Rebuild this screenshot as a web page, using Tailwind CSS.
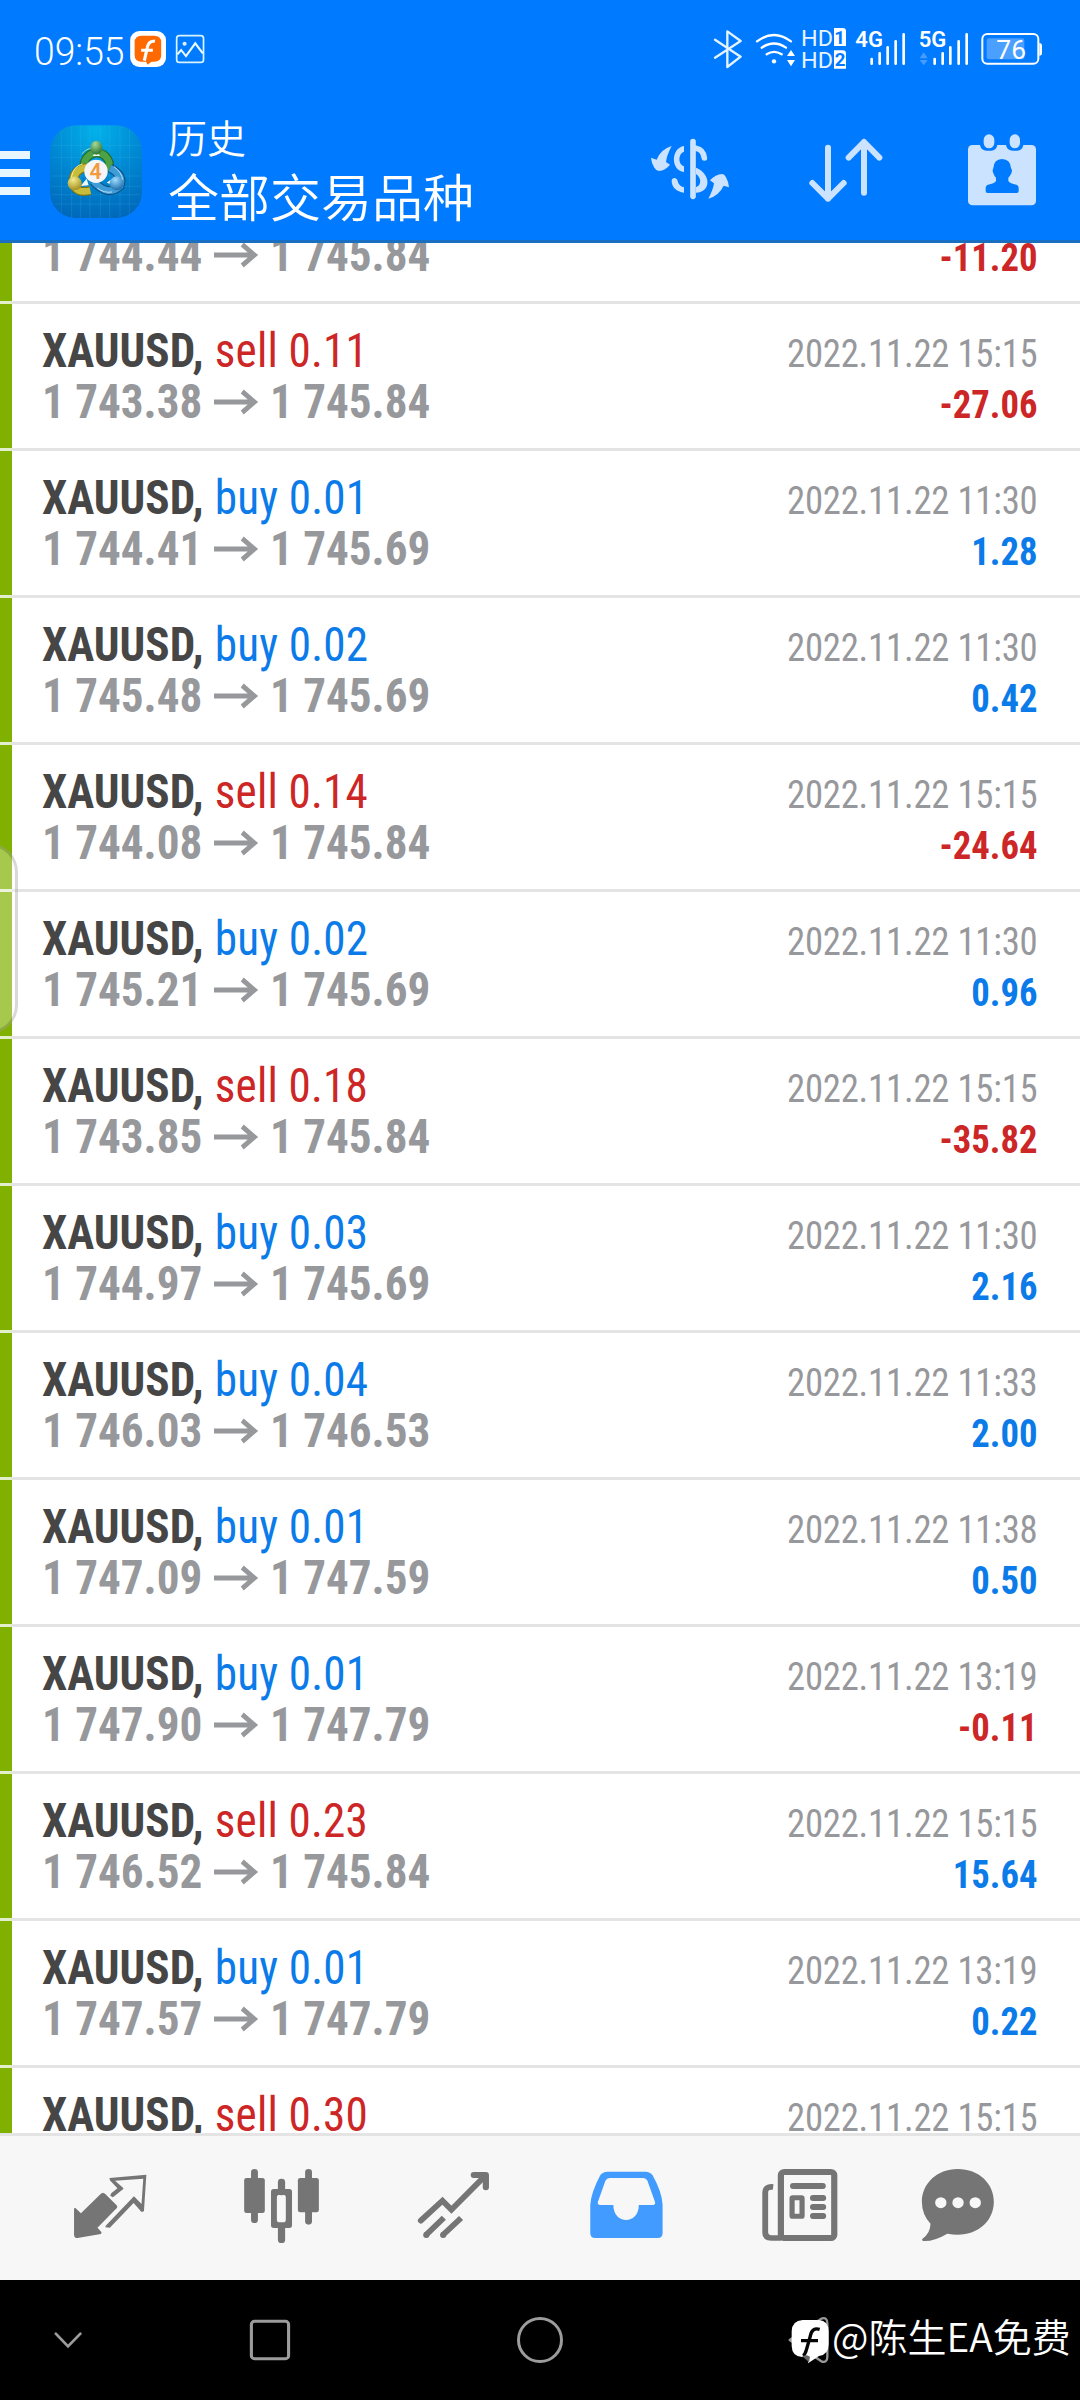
<!DOCTYPE html>
<html lang="zh-CN">
<head>
<meta charset="utf-8">
<title>历史</title>
<script src="https://cdn.jsdelivr.net/npm/@tailwindcss/browser@4"></script>
</head>
<body class="bg-black">
<div class="relative flex h-[2400px] w-[1080px] flex-col overflow-hidden bg-white font-[Roboto,'Noto_Sans_CJK_SC',sans-serif]">

  <!-- header -->
  <header class="flex h-[243px] shrink-0 flex-col border-b-3 border-[#1a6fc0] bg-[#007aff] text-white">
    <div class="flex h-[100px] items-center">
      <span class="ml-[34px] w-[94px] origin-left scale-x-[.98] pt-[3px] text-[38px] leading-none font-[350] whitespace-nowrap">09:55</span>
      <svg class="h-[100px] w-[82px]" viewBox="371.7 0 238.1 300" preserveAspectRatio="none">
        <rect x="378" y="93" width="104" height="108" rx="27" fill="#fff"/>
        <path d="M411 107h37q20 0 20 20v38q0 20-20 20h-8l-13 8-2-8h-14q-20 0-20-20v-38q0-20 20-20z" fill="#ff6a00"/>
        <path d="M450 124q-18-3-22 18l-9 40M410 151h34" fill="none" stroke="#fff" stroke-width="9"/>
        <path d="M425 180l4 14 14-13z" fill="#ff6a00"/>
        <rect x="513" y="107" width="78" height="80" rx="8" fill="none" stroke="#d9f3ff" stroke-width="5"/>
        <circle cx="536" cy="131" r="6" fill="#d9f3ff"/>
        <path d="M515 163l11-13 14 18 27-38 22 30" fill="none" stroke="#e9fbff" stroke-width="6"/>
      </svg>
      <svg class="ml-auto h-[100px] w-[380px]" viewBox="300 0 1140 300" fill="none" stroke="#fff" stroke-linecap="round">
        <path d="M345 119l77 51-40 31V94l40 29-77 50" stroke-width="7" stroke="#e4f4ff" stroke-linejoin="round"/>
        <path d="M471 124q51-38 102 0M485 143q37-25 73 0M500 163q22-15 45 0" stroke-width="7"/>
        <circle cx="522" cy="184" r="6.500" fill="#fff" stroke="none"/>
        <path d="M573 150l12 18h-24zM573 199l12-19h-24z" fill="#fff" stroke="none"/>
        <g stroke="none" fill="#e6f4ff" font-family="Roboto" font-size="67">
          <text x="603" y="137" textLength="96" lengthAdjust="spacingAndGlyphs">HD</text>
          <text x="603" y="204" textLength="96" lengthAdjust="spacingAndGlyphs">HD</text>
        </g>
        <path d="M702 84h26q10 0 10 10v44h-36zM702 151h26q10 0 10 10v45h-36z" fill="#fff" stroke="none"/>
        <g stroke="none" fill="#007aff" font-family="Roboto" font-weight="700" font-size="56">
          <text x="703" y="133">1</text><text x="704" y="199">2</text>
        </g>
        <g stroke="none" fill="#fff" font-family="Roboto" font-weight="600" font-size="64">
          <text x="766" y="141" textLength="83" lengthAdjust="spacingAndGlyphs">4G</text>
          <text x="956" y="141" textLength="83" lengthAdjust="spacingAndGlyphs">5G</text>
        </g>
        <path d="M815 177v14M839 160v31M863 142v49M887 124v67M911 103v88M1004 177v14M1028 160v31M1051 142v49M1076 124v67M1100 103v88" stroke-width="8"/>
        <path d="M971 157l12 18h-24zM971 196l12-16h-24z" fill="#479dff" stroke="none"/>
        <rect x="1147" y="102" width="168" height="89" rx="15" stroke-width="6"/>
        <path d="M1318 129q8 0 8 8v22q0 8-8 8z" fill="#fff" stroke="none"/>
        <rect x="1160" y="115" width="113" height="63" rx="6" fill="#4a9fff" stroke="none"/>
        <text x="1189" y="177" stroke="none" fill="#fff" font-family="Roboto" font-size="80" textLength="89" lengthAdjust="spacingAndGlyphs">76</text>
      </svg>
    </div>
    <div class="flex h-[140px] items-center">
      <div class="mt-[6px] flex w-[30px] flex-col gap-[10px]">
        <i class="h-[8px] bg-[#e8f6ff]"></i><i class="h-[8px] bg-[#e8f6ff]"></i><i class="h-[8px] bg-[#e8f6ff]"></i>
      </div>
      <svg class="mt-[3px] ml-[20px] h-[94px] w-[92px]" viewBox="30 43 276 282">
        <defs>
          <radialGradient id="sky" cx=".5" cy=".05" r="1"><stop offset="0" stop-color="#02b2ea"/><stop offset=".5" stop-color="#0088d2"/><stop offset="1" stop-color="#0066b8"/></radialGradient>
          <radialGradient id="gr" cx=".4" cy=".25" r=".8"><stop offset="0" stop-color="#a5d99a"/><stop offset="1" stop-color="#23702b"/></radialGradient>
          <radialGradient id="ye" cx=".4" cy=".25" r=".8"><stop offset="0" stop-color="#f4ec8c"/><stop offset="1" stop-color="#a08a1a"/></radialGradient>
          <radialGradient id="bl" cx=".4" cy=".25" r=".8"><stop offset="0" stop-color="#9fdcff"/><stop offset="1" stop-color="#1468a6"/></radialGradient>
        </defs>
        <rect x="30" y="44" width="276" height="278" rx="78" fill="url(#sky)"/>
        <path d="M64 60v248M95 46v276M122 46v276M150 46v276M181 46v276M209 46v276M240 46v276M268 56v256M34 104h268M32 140h272M32 196h272M32 227h272M36 252h264M44 280h248" stroke="#5cc4f4" stroke-opacity=".25" stroke-width="2"/>
        <g fill="none">
          <path d="M133 172a38 38 0 1 1 72 8" stroke="#1f6d2a" stroke-width="27"/>
          <path d="M133 172a38 38 0 1 1 72 8" stroke="#4ea246" stroke-width="20"/>
          <path d="M125 130q20-26 58-14" stroke="#a8dc9c" stroke-width="3"/>
          <path d="M140 170q-41 8-41 44 5 36 52 26" stroke="#7c7414" stroke-width="27"/>
          <path d="M140 170q-41 8-41 44 5 36 52 26" stroke="#c8bd3a" stroke-width="20"/>
          <path d="M94 200q6-34 34-40" stroke="#f6f09a" stroke-width="3"/>
          <path d="M210 172q42 22 30 54-36 34-80-14" stroke="#0d5288" stroke-width="27"/>
          <path d="M210 172q42 22 30 54-36 34-80-14" stroke="#3f9cd6" stroke-width="20"/>
          <path d="M222 168q24 18 26 40M172 232q20 16 44 12" stroke="#b4e2fa" stroke-width="3"/>
        </g>
        <path d="M158 136h22l-11-16zM200 216l20-14-2 20zM122 226l18-22 6 20z" fill="#eefaf0"/>
        <ellipse cx="169" cy="111" rx="18" ry="21" fill="url(#gr)"/>
        <circle cx="104" cy="218" r="21" fill="url(#ye)"/>
        <circle cx="230" cy="218" r="21" fill="url(#bl)"/>
        <circle cx="168" cy="182" r="35" fill="#f5f5f7"/>
        <text x="167" y="205" text-anchor="middle" font-family="Roboto" font-weight="600" font-size="64" fill="#f19a3e">4</text>
      </svg>
      <div class="-mt-[9px] ml-[26px] flex flex-col font-['Noto_Sans_CJK_SC',sans-serif] font-[350] whitespace-nowrap">
        <span class="text-[39px] leading-[58px]">历史</span>
        <span class="text-[51px] leading-[60px]">全部交易品种</span>
      </div>
      <svg class="ml-auto h-[140px] w-[440px]" viewBox="120 300 1320 420" fill="none" stroke="#cbe3ff" stroke-linecap="round" stroke-linejoin="round">
        <path d="M279 425v164" stroke-width="17"/>
        <path d="M288 445q22 4 25 29" stroke-width="17"/>
        <path d="M252 438c-40 6-40 74 0 78v-17c-19-6-18-38 0-44z" fill="#cbe3ff" stroke="none"/>
        <path d="M288 503c46 18 46 74 0 75v-17c17-4 17-28 0-39z" fill="#cbe3ff" stroke="none"/>
        <path d="M215 543c0-12 16-12 18 0 2 10 8 16 19 19v16c-22-3-37-16-37-35z" fill="#cbe3ff" stroke="none"/>
        <path d="M215 438q-15 28-17 48l12 8q-14 18-33 19-8 0-14-10-9-15-10-30l17 6q12-31 45-41z" fill="#cbe3ff" stroke="none"/>
        <path d="M325 596q15-28 17-46l-12-9q16-18 37-19 6 0 11 10 8 14 9 30l-16-5q-14 30-46 39z" fill="#cbe3ff" stroke="none"/>
        <path d="M684 443v153M637 549l47 47 47-47M792 578V426M746 473l46-47 46 47" stroke-width="18"/>
        <g stroke="none" fill="#cbe3ff">
          <rect x="1104" y="435" width="204" height="181" rx="13"/>
          <path d="M1140 430v6q4 16 20 16h14q14 0 18-16v-6zM1218 430v6q4 16 20 16h14q14 0 18-16v-6z" fill="#007aff"/>
          <rect x="1151" y="403" width="32" height="42" rx="16"/>
          <rect x="1229" y="403" width="31" height="42" rx="16"/>
          <path d="M1206 477q26 1 27 28 5 5 1 15-4 9-9 13v10q5 8 24 11 7 2 7 12v8q0 5-6 5h-87q-6 0-6-5v-8q0-10 7-12 19-3 24-11v-10q-5-4-8-13-4-10 0-15 1-27 26-28z" fill="#007aff"/>
        </g>
      </svg>
    </div>
  </header>

  <!-- deals -->
  <main class="h-[1890px] shrink-0 overflow-hidden">
    <ul id="deals" class="-mt-[86px]"></ul>
  </main>

  <!-- tab bar -->
  <nav class="grid h-[147px] shrink-0 grid-cols-6 border-t-3 border-[#e4e4e4] bg-[#f7f7f7]">
    <svg class="h-[144px] w-[180px]" viewBox="0 288 522.7 432" preserveAspectRatio="none" fill="#757575">
      <path d="M299 458l6 3 35 36v6l-57 60 12 14-2 5-68 12q-10 0-10-10v-79l4-1 16 16 58-59z"/>
      <path fill-rule="evenodd" d="M318 414l107-10-7 110-7 2-23-27-69 74-13-1 1-5 82-88 22 23 5-76-82 6 24 22v3l-30 25-8-5 3-7 18-15-22-24z"/>
    </svg>
    <svg class="h-[144px] w-[180px]" viewBox="522.7 288 522.7 432" preserveAspectRatio="none" fill="#757575">
      <rect x="709" y="414" width="60" height="105" rx="7"/><rect x="729" y="387" width="20" height="162" rx="10"/>
      <rect x="865" y="414" width="61" height="103" rx="7"/><rect x="886" y="387" width="20" height="167" rx="10"/>
      <rect x="807" y="416" width="21" height="50" rx="10"/><rect x="807" y="550" width="21" height="59" rx="10"/>
      <path fill-rule="evenodd" d="M795 447h45q8 0 8 8v101q0 8-8 8h-45q-8 0-8-8V455q0-8 8-8zm17 17q-8 0-8 8v67q0 8 8 8h10q8 0 8-8v-67q0-8-8-8z"/>
    </svg>
    <svg class="h-[144px] w-[180px]" viewBox="1045.500 288 522.7 432" preserveAspectRatio="none" fill="none" stroke="#757575" stroke-width="17">
      <path d="M1222 542l63-60 26 27 98-102" stroke-linecap="round"/>
      <path d="M1376 405h35v37" stroke-linecap="round" stroke-linejoin="round" stroke-width="18"/>
      <circle cx="1238" cy="585" r="9" fill="#757575" stroke="none"/><circle cx="1287" cy="585" r="9" fill="#757575" stroke="none"/>
      <path d="M1237 585l52-52M1286 585l53-51"/>
    </svg>
    <svg class="h-[144px] w-[180px]" viewBox="0 288 522.7 432" preserveAspectRatio="none">
      <path fill="#429cff" fill-rule="evenodd" d="M196 395h110q14 0 21 11 27 50 29 88v86q0 14-14 14H160q-14 0-14-14v-86q3-38 29-88 7-11 21-11zm6 19q-8 0-12 8l-22 64q-2 8 7 9h38c0 60 74 60 74 0h41q8-1 6-9l-22-64q-4-8-12-8z"/>
    </svg>
    <svg class="h-[144px] w-[180px]" viewBox="522.7 288 522.7 432" preserveAspectRatio="none" fill="none" stroke="#757575">
      <rect x="699.500" y="396" width="155" height="198" rx="10" stroke-width="18"/>
      <path d="M677 441q-23-3-23 18v118q0 17 18 17h28" stroke-width="17"/>
      <path d="M735 438h86M793 474h29M793 501h29M793 528h29" stroke-width="18" stroke-linecap="round"/>
      <rect x="732" y="473" width="29" height="56" rx="2" stroke-width="15" stroke-linejoin="round"/>
    </svg>
    <svg class="h-[144px] w-[180px]" viewBox="1045.500 288 522.7 432" preserveAspectRatio="none" fill="#757575">
      <path d="M1213 387c62 0 105 44 105 98 0 56-44 99-105 99q-14 0-30-3-40 24-70 22-5-2-3-6 24-18 24-46-25-28-25-66c0-54 44-98 104-98z"/>
      <circle cx="1164" cy="488" r="16.500" fill="#f7f7f7"/><circle cx="1214" cy="488" r="16.500" fill="#f7f7f7"/><circle cx="1264" cy="488" r="16.500" fill="#f7f7f7"/>
    </svg>
  </nav>

  <!-- system navigation -->
  <footer class="flex h-[120px] shrink-0 items-center bg-black text-white">
    <svg class="h-[120px] w-[160px]" viewBox="0 720 464.6 360" preserveAspectRatio="none" fill="none" stroke="#9c9c9c" stroke-width="8"><path d="M162 881l35.500 38 36-38" stroke-linecap="round"/></svg>
    <svg class="h-[120px] w-[220px]" viewBox="464.6 720 638.9 360" preserveAspectRatio="none" fill="none" stroke="#9c9c9c" stroke-width="9"><rect x="730" y="844" width="108" height="112" rx="9"/></svg>
    <svg class="h-[120px] w-[320px]" viewBox="380 2280 320 120" fill="none" stroke="#9c9c9c" stroke-width="3"><circle cx="540" cy="2340" r="21.500"/></svg>
    <svg class="ml-[80px] h-[120px] w-[52px]" viewBox="0 -90 156 360">
      <path d="M29 90l95-64q18-6 18 14v100q0 20-18 14z" fill="#000" stroke="#999" stroke-width="7" stroke-linejoin="round"/>
      <path d="M68 30h48q30 2 30 34v38q0 32-29 36l-33 22 3-19H66q-30-2-31-33V64q1-32 33-34z" fill="#fff"/>
      <path d="M119 58q-23-7-28 20l-12 42q-4 14-10 17M63 92h51" fill="none" stroke="#050505" stroke-width="10"/>
      <path d="M66 138l15-2 9 4-3 17z" fill="#666"/>
    </svg>
    <span class="pb-[10px] font-['Noto_Sans_CJK_SC',sans-serif] text-[39px] leading-none font-[350] whitespace-nowrap">@陈生EA免费</span>
  </footer>

  <!-- edge panel handle -->
  <div class="absolute top-[843px] -left-10 h-[191px] w-[58px] rounded-[29px] border-3 border-black/15 bg-white/30"></div>
</div>

<script>
  const deals = [
    ['sell', '0.10', '1 744.44', '1 745.84', '15:15', '-11.20'],
    ['sell', '0.11', '1 743.38', '1 745.84', '15:15', '-27.06'],
    ['buy', '0.01', '1 744.41', '1 745.69', '11:30', '1.28'],
    ['buy', '0.02', '1 745.48', '1 745.69', '11:30', '0.42'],
    ['sell', '0.14', '1 744.08', '1 745.84', '15:15', '-24.64'],
    ['buy', '0.02', '1 745.21', '1 745.69', '11:30', '0.96'],
    ['sell', '0.18', '1 743.85', '1 745.84', '15:15', '-35.82'],
    ['buy', '0.03', '1 744.97', '1 745.69', '11:30', '2.16'],
    ['buy', '0.04', '1 746.03', '1 746.53', '11:33', '2.00'],
    ['buy', '0.01', '1 747.09', '1 747.59', '11:38', '0.50'],
    ['buy', '0.01', '1 747.90', '1 747.79', '13:19', '-0.11'],
    ['sell', '0.23', '1 746.52', '1 745.84', '15:15', '15.64'],
    ['buy', '0.01', '1 747.57', '1 747.79', '13:19', '0.22'],
    ['sell', '0.30', '1 746.21', '1 745.84', '15:15', '11.10'],
  ];
  const red = 'text-[#cc2626]', blue = 'text-[#0a7be8]';
  document.getElementById('deals').innerHTML = deals.map(([side, lots, from, to, time, profit]) => `
    <li class="flex h-[147px] flex-col [font-stretch:75%]">
      <div class="flex h-[144px] border-l-12 border-[#80b000] pr-[43px] pl-[30px]">
        <div class="origin-left scale-x-[.94] pt-[21px] text-[48px] leading-[51px] whitespace-nowrap">
          <div><span class="font-bold text-[#464646]">XAUUSD,</span> <span class="ml-px tracking-[.2px] ${side === 'sell' ? red : blue}">${side} ${lots}</span></div>
          <div class="flex items-center font-bold text-[#97989c]">
            <span>${from}</span>
            <svg class="mr-[13px] ml-[12px] h-[26px] w-[47px]" viewBox="0 0 47 26" fill="none" stroke="currentColor" stroke-width="5"><path d="M0 13h42M30 2.500l13 10.500-13 10.500"/></svg>
            <span>${to}</span>
          </div>
        </div>
        <div class="ml-auto origin-right scale-x-[.94] pt-[25px] text-right text-[39px] leading-[51px] whitespace-nowrap">
          <div class="tracking-[-.2px] text-[#97989c]">2022.11.22 ${time}</div>
          <div class="font-bold ${profit[0] === '-' ? red : blue}">${profit}</div>
        </div>
      </div>
      <div class="h-[3px] border-l-12 border-[#e3efca] bg-[#e4e4e4]"></div>
    </li>`).join('');
</script>
</body>
</html>
